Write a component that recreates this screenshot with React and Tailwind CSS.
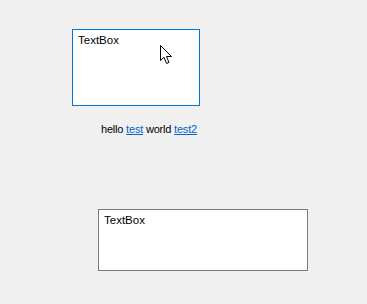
const Cursor = () => (
    <svg width="13" height="20" viewBox="0 0 13 20" className="absolute left-[87px] top-[15px]">
        <path
            d="M0.5 0.5 L0.5 15.5 L4 12.3 L6.6 18.5 L9 17.4 L6.5 11.5 L11.5 11.5 Z"
            fill="#fff"
            stroke="#000"
            strokeWidth="1"
            strokeLinejoin="miter"
        />
    </svg>
);

const TextBox = ({ className, children }) => (
    <div className={`relative bg-white px-[5px] pt-[3px] text-[11.5px] leading-[15px] text-black ${className}`}>
        {children}
    </div>
);

export default function App() {
    return (
        <div className="w-[367px] h-[304px] bg-[#f0f0f0] overflow-hidden" style={{ fontFamily: '"Liberation Sans", Arial, sans-serif' }}>
            <div className="pt-[29px] flex flex-col">
                <TextBox className="ml-[72px] w-[128px] h-[77px] border border-[#0078d7]">
                    TextBox
                    <Cursor />
                </TextBox>
                <div className="ml-[101px] mt-[15px] text-[11px] leading-[16px] tracking-[-0.2px] text-black">
                    hello <a className="text-[#0066cc] underline">test</a> world{' '}
                    <a className="text-[#0066cc] underline">test2</a>
                </div>
                <TextBox className="ml-[98px] mt-[72px] w-[210px] h-[62px] border border-[#7a7a7a]">
                    TextBox
                </TextBox>
            </div>
        </div>
    );
}
